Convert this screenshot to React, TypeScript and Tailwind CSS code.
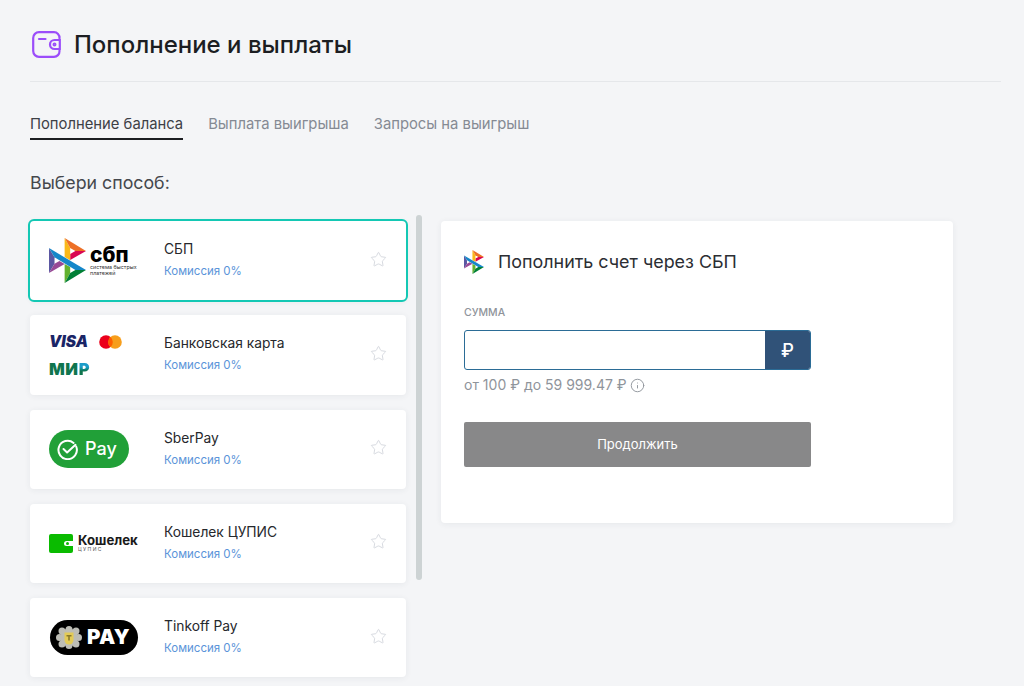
import type { ReactNode } from 'react';
import { Star, Info } from 'lucide-react';

function SbpMark({ className }: { className?: string }) {
  return (
    <svg viewBox="0 0 44.2 57.6" preserveAspectRatio="none" className={className}>
      <polygon points="0,12.93 6.6,24.72 6.6,32.9 0,44.67" fill="#5b57a2" />
      <polygon points="25.33,20.43 31.5,16.64 44.18,16.63 25.33,28.18" fill="#d90751" />
      <polygon points="25.3,12.87 25.33,28.46 18.7,24.38 18.7,0" fill="#fab91a" />
      <polygon points="44.18,16.63 31.5,16.64 25.3,12.87 18.7,0" fill="#ed6f26" />
      <polygon points="25.33,44.73 25.33,37.17 18.7,33.2 18.7,57.6" fill="#63b22f" />
      <polygon points="0,12.93 44.18,40.97 31.5,40.96 6.6,24.72" fill="#1487c9" />
      <polygon points="18.7,57.6 25.33,44.73 31.5,40.96 44.18,40.97" fill="#017f36" />
      <polygon points="0,44.67 18.75,33.2 12.45,29.3 6.6,32.9" fill="#984995" />
    </svg>
  );
}

function SbpLogo() {
  return (
    <div className="flex items-start">
      <SbpMark className="w-[37px] h-[45px] shrink-0" />
      <div className="ml-[4px] mt-[7px] text-black">
        <div className="text-[21px] font-extrabold leading-[20px]">сбп</div>
        <div className="w-[50px] text-[5.4px] leading-[5.5px] text-[#333]">система быстрых платежей</div>
      </div>
    </div>
  );
}

function CardsLogo() {
  return (
    <div className="flex flex-col gap-[14px] pt-[1px]">
      <div className="flex items-center gap-[10px] h-[14px]">
        <span className="w-[40px] text-[15.5px] leading-[14px] font-black italic text-[#1a2566]">VISA</span>
        <svg width="23" height="14" viewBox="0 0 23 14">
          <circle cx="7" cy="7" r="6.8" fill="#eb001b" />
          <circle cx="16" cy="7" r="6.8" fill="#f79e1b" />
          <path d="M11.5 1.9a6.8 6.8 0 0 1 0 10.2a6.8 6.8 0 0 1 0-10.2z" fill="#ff5f00" />
        </svg>
      </div>
      <span className="text-[16.5px] leading-[13px] font-black tracking-[0.6px] text-[#0f754e]">
        МИ
        <span className="bg-gradient-to-b from-[#1d9cc9] from-40% to-[#0f754e] to-60% bg-clip-text text-transparent">Р</span>
      </span>
    </div>
  );
}

function SberLogo() {
  return (
    <div className="w-[80px] h-[38px] rounded-full bg-[#21a038] flex items-center pl-[8px] gap-[7px] text-white">
      <svg width="21" height="21" viewBox="0 0 21 21" fill="none" stroke="white" strokeWidth="2" strokeLinecap="round" strokeLinejoin="round">
        <path d="M19.2 7.5a9.2 9.2 0 1 1-2.6-3.6" />
        <path d="M6.5 10l3.6 3.4 8.4-7.6" />
      </svg>
      <span className="text-[18px] font-medium leading-none">Pay</span>
    </div>
  );
}

function WalletLogo() {
  return (
    <div className="flex items-center gap-[5px]">
      <div className="relative w-[24px] h-[19px] rounded-[2px] bg-[#0abb00]">
        <span className="absolute right-0 top-[7px] w-[9px] h-[5px] rounded-l-full bg-white" />
        <span className="absolute right-[4px] top-[8px] w-[3px] h-[3px] rounded-full bg-[#0abb00]" />
      </div>
      <div className="text-[#1a1a1a]">
        <div className="text-[13.2px] font-bold leading-[13px]">Кошелек</div>
        <div className="text-[5px] leading-[5px] tracking-[1.4px] text-[#555]">ЦУПИС</div>
      </div>
    </div>
  );
}

function TinkoffLogo() {
  return (
    <div className="w-[88px] h-[35px] ml-[1px] rounded-full bg-black flex items-center pl-[6px] gap-[5px] text-white">
      <svg width="26" height="23" viewBox="0 0 26 23" className="shrink-0">
        <g fill="#bdbdb5">
          <circle cx="13" cy="11.5" r="9" />
          <circle cx="6" cy="5" r="3.5" />
          <circle cx="13" cy="3.5" r="3.5" />
          <circle cx="20" cy="5" r="3.5" />
          <circle cx="3.5" cy="11.5" r="3.5" />
          <circle cx="22.5" cy="11.5" r="3.5" />
          <circle cx="6" cy="18" r="3.5" />
          <circle cx="13" cy="19.5" r="3.5" />
          <circle cx="20" cy="18" r="3.5" />
        </g>
        <path d="M8.5 6.5h9v7.5a4.5 4.5 0 0 1-9 0z" fill="#e3cb57" />
        <path d="M10.5 9h5v1.6h-1.7v4h-1.6v-4h-1.7z" fill="#8a7a2c" />
      </svg>
      <span className="text-[20.5px] font-black leading-none tracking-[0.3px]">PAY</span>
    </div>
  );
}

const methods: { name: string; logo: ReactNode }[] = [
  { name: 'СБП', logo: <SbpLogo /> },
  { name: 'Банковская карта', logo: <CardsLogo /> },
  { name: 'SberPay', logo: <SberLogo /> },
  { name: 'Кошелек ЦУПИС', logo: <WalletLogo /> },
  { name: 'Tinkoff Pay', logo: <TinkoffLogo /> },
];

function MethodCard({ name, logo, active }: { name: string; logo: ReactNode; active?: boolean }) {
  return (
    <div
      className={
        'h-[79.25px] shrink-0 flex items-center bg-white rounded-[4px] shadow-[0_1px_6px_rgba(40,50,70,0.07)] pl-[19px] pr-[19px]' +
        (active ? ' outline-2 outline-[#14c8b4]' : '')
      }
    >
      <div className="w-[115px] shrink-0">{logo}</div>
      <div className="flex-1 -mt-[2px]">
        <div className="text-[13.8px] leading-[18px] text-[#26282c]">{name}</div>
        <div className="mt-[5px] text-[11.5px] leading-[16px] text-[#5b94d9]">Комиссия 0%</div>
      </div>
      <Star size={17} strokeWidth={1.2} className="text-[#d0d3da] -mt-[3px]" />
    </div>
  );
}

export default function App() {
  return (
    <div className="h-[686px] overflow-hidden bg-[#f4f5f7] pl-[30px] pr-[23px] pt-[31px] font-['Inter',sans-serif]">
      <div className="flex items-center gap-[13px] h-[27px] ml-[2px]">
        <svg width="29" height="27" viewBox="0 0 29 27" fill="none" stroke="#9b4dfa" strokeWidth="2.2" strokeLinecap="round">
          <path d="M27.5 7.5V7A5.5 5.5 0 0 0 22 1.2H7A5.8 5.8 0 0 0 1.2 7v13A5.8 5.8 0 0 0 7 25.8h15a5.5 5.5 0 0 0 5.5-5.7v-.6" />
          <path d="M27.8 9h-5.3a4.5 4.5 0 0 0 0 9h5.3z" />
          <circle cx="22.5" cy="13.5" r="0.9" />
          <path d="M7 8h6.5" />
        </svg>
        <h1 className="text-[24px] font-medium leading-[27px] text-[#1c1e22]">Пополнение и выплаты</h1>
      </div>
      <div className="mt-[23px] h-px bg-[#e5e7ea]" />

      <div className="mt-[32px] flex gap-[25px] text-[14.8px] leading-[20px]">
        <div className="pb-[4px] border-b-2 border-[#1c1e22] text-[#3d4046]">Пополнение баланса</div>
        <div className="text-[#858a93]">Выплата выигрыша</div>
        <div className="text-[#858a93]">Запросы на выигрыш</div>
      </div>

      <div className="mt-[32px] text-[17.8px] leading-[22px] text-[#45484d]">Выбери способ:</div>

      <div className="mt-[21px] flex items-start">
        <div className="w-[376px] shrink-0 flex flex-col gap-[15px] mt-[6px]">
          {methods.map((m, i) => (
            <MethodCard key={m.name} name={m.name} logo={m.logo} active={i === 0} />
          ))}
        </div>
        <div className="ml-[10px] w-[6px] h-[365px] rounded-full bg-[#cdd3d4]" />

        <div className="ml-[19px] mt-[6px] w-[512px] h-[302px] bg-white rounded-[4px] shadow-[0_1px_6px_rgba(40,50,70,0.07)] pl-[23px] pt-[29px]">
          <div className="flex items-center gap-[14px] h-[23px]">
            <SbpMark className="w-[20px] h-[24px] shrink-0" />
            <h2 className="text-[17.9px] leading-[22px] text-[#2c2e33]">Пополнить счет через СБП</h2>
          </div>
          <div className="mt-[33px] text-[10.5px] leading-[14px] font-medium text-[#8f949b]">СУММА</div>
          <div className="mt-[10px] w-[347px] h-[40px] flex border border-[#2b6c96] rounded-[3px] overflow-hidden bg-white">
            <input className="flex-1 min-w-0 outline-none" aria-label="Сумма" />
            <div className="w-[45px] bg-[#305278] flex items-center justify-center text-white text-[18px] font-medium">₽</div>
          </div>
          <div className="mt-[6px] flex items-center gap-[3px] text-[14px] leading-[18px] text-[#8f949b]">
            от 100 ₽ до 59 999.47 ₽
            <Info size={15} strokeWidth={1.5} />
          </div>
          <button type="button" className="mt-[28px] w-[347px] h-[45px] rounded-[2px] bg-[#888889] text-[13px] text-white">
            Продолжить
          </button>
        </div>
      </div>
    </div>
  );
}
